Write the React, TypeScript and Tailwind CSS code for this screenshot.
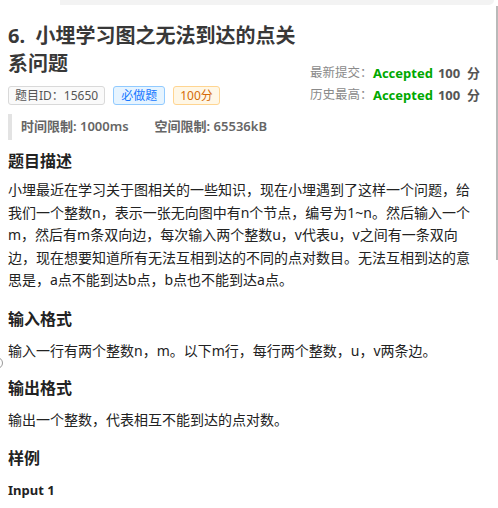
import React from "react";

export default function App() {
  const font = { fontFamily: "'Noto Sans', 'Noto Sans CJK SC', sans-serif" };
  return (
    <div className="relative w-[498px] h-[508px] overflow-hidden bg-white text-[#222]" style={font}>
      <div className="ml-[60px] mr-[4px] h-[5px] bg-[#f3f3f3] rounded-br-[6px]" />
      <div className="absolute right-0 top-[6px] h-[254px] w-[2px] bg-[#b9b9b9]" />
      <div className="absolute left-[-9px] top-[357px] w-[12px] h-[12px] rounded-full border border-[#9a9a9a]" />

      <div className="px-[8px] pt-[17px]">
        <div className="flex items-end justify-between">
          <div className="w-[300px]">
            <h1 className="text-[20px] leading-[28px] font-bold text-[#383838]">6.&nbsp; 小埋学习图之无法到达的点关系问题</h1>
            <div className="mt-[8px] flex items-center gap-[8px] text-[12px]">
              <span className="h-[19px] px-[6px] flex items-center rounded-[3px] border border-[#d9d9d9] bg-[#fafafa] text-[#555]">题目ID：15650</span>
              <span className="h-[19px] px-[7px] flex items-center rounded-[3px] border border-[#91caff] bg-[#e6f4ff] text-[#1677ff]">必做题</span>
              <span className="h-[19px] px-[6px] flex items-center rounded-[3px] border border-[#ffd591] bg-[#fff7e6] text-[#d46b08]">100分</span>
            </div>
          </div>
          <div className="mr-[10px] mb-[-1px] text-[13px] leading-[22px] whitespace-nowrap">
            <div className="flex"><span className="text-[#8a8a8a] w-[63px] shrink-0 text-[12.5px]">最新提交：</span><span className="font-bold text-[#00a800]">Accepted</span><span className="font-bold text-[#555] ml-[5px]">100&nbsp; 分</span></div>
            <div className="flex"><span className="text-[#8a8a8a] w-[63px] shrink-0 text-[12.5px]">历史最高：</span><span className="font-bold text-[#00a800]">Accepted</span><span className="font-bold text-[#555] ml-[5px]">100&nbsp; 分</span></div>
          </div>
        </div>

        <div className="mt-[9px] h-[26px] border-l-[4px] border-[#e3e3e3] pl-[9px] flex items-center text-[13px] font-semibold text-[#666]">
          <span>时间限制: 1000ms</span>
          <span className="ml-[26px]">空间限制: 65536kB</span>
        </div>

        <h2 className="mt-[9px] text-[16px] leading-[24px] font-bold text-[#222]">题目描述</h2>
        <p className="mt-[6px] w-[466px] text-[14px] leading-[22.5px] text-[#222]">
          小埋最近在学习关于图相关的一些知识，现在小埋遇到了这样一个问题，给我们一个整数n，表示一张无向图中有n个节点，编号为1~n。然后输入一个m，然后有m条双向边，每次输入两个整数u，v代表u，v之间有一条双向边，现在想要知道所有无法互相到达的不同的点对数目。无法互相到达的意思是，a点不能到达b点，b点也不能到达a点。
        </p>

        <h2 className="mt-[15px] text-[16px] leading-[24px] font-bold text-[#222]">输入格式</h2>
        <p className="mt-[9px] text-[14px] leading-[22.5px] text-[#222]">输入一行有两个整数n，m。以下m行，每行两个整数，u，v两条边。</p>

        <h2 className="mt-[14px] text-[16px] leading-[24px] font-bold text-[#222]">输出格式</h2>
        <p className="mt-[9px] text-[14px] leading-[22.5px] text-[#222]">输出一个整数，代表相互不能到达的点对数。</p>

        <h2 className="mt-[14px] text-[16px] leading-[24px] font-bold text-[#222]">样例</h2>
        <div className="mt-[10px] text-[13px] leading-[20px] font-bold text-[#222]">Input 1</div>
      </div>
    </div>
  );
}
